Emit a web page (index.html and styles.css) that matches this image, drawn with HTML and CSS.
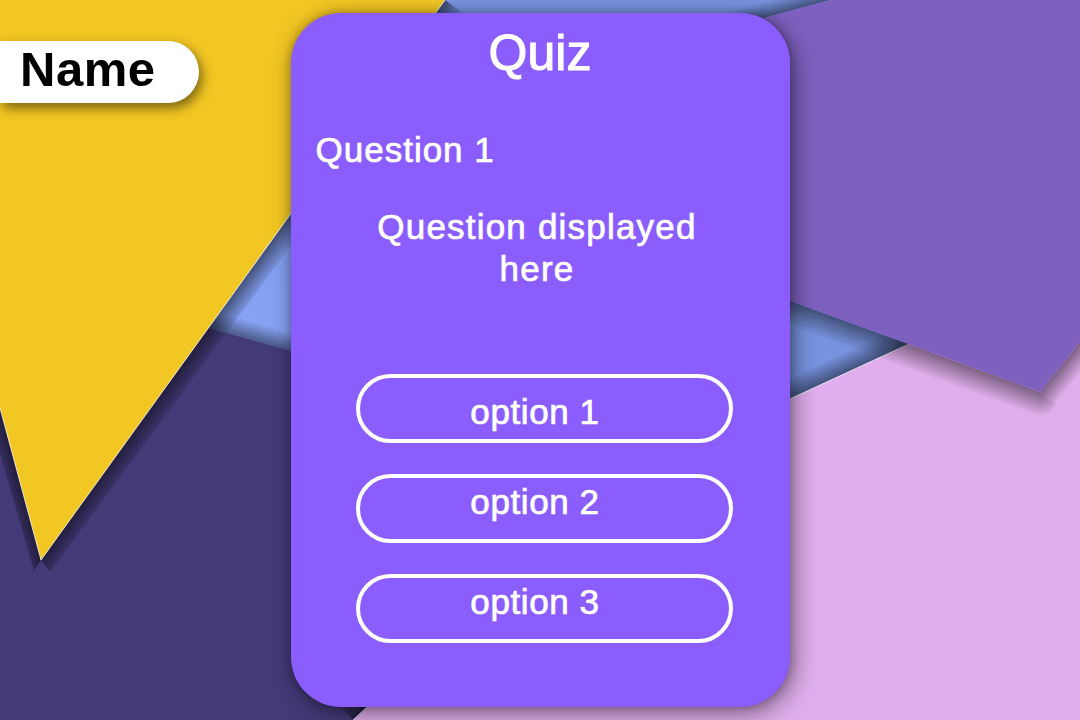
FILE: index.html
```html
<!DOCTYPE html>
<html lang="en">
<head>
<meta charset="utf-8">
<title>Quiz</title>
<link rel="stylesheet" href="styles.css">
</head>
<body>
<svg class="backdrop" viewBox="0 0 1080 720" width="1080" height="720" aria-hidden="true">
  <defs>
    <radialGradient id="glowA" cx="250" cy="320" r="260" gradientUnits="userSpaceOnUse">
      <stop offset="0" stop-color="#87a3f5"/>
      <stop offset="1" stop-color="#7893e0"/>
    </radialGradient>
    <linearGradient id="shDark" gradientUnits="userSpaceOnUse" x1="360" y1="370" x2="364.8" y2="352.6">
      <stop offset="0" stop-color="#000" stop-opacity="0.45"/><stop offset="1" stop-color="#000" stop-opacity="0"/>
    </linearGradient>
    <linearGradient id="shPinkTop" gradientUnits="userSpaceOnUse" x1="845" y1="373.5" x2="836.6" y2="355.3">
      <stop offset="0" stop-color="#000" stop-opacity="0.45"/><stop offset="1" stop-color="#000" stop-opacity="0"/>
    </linearGradient>
    <linearGradient id="shPinkLeft" gradientUnits="userSpaceOnUse" x1="481.5" y1="601" x2="467.9" y2="586.3">
      <stop offset="0" stop-color="#000" stop-opacity="0.45"/><stop offset="1" stop-color="#000" stop-opacity="0"/>
    </linearGradient>
    <linearGradient id="shPurpleBottom" gradientUnits="userSpaceOnUse" x1="911" y1="345" x2="902.8" y2="367.6">
      <stop offset="0" stop-color="#000" stop-opacity="0.45"/><stop offset="1" stop-color="#000" stop-opacity="0"/>
    </linearGradient>
    <linearGradient id="shPurpleRight" gradientUnits="userSpaceOnUse" x1="1060" y1="367" x2="1075.6" y2="379.5">
      <stop offset="0" stop-color="#000" stop-opacity="0.45"/><stop offset="1" stop-color="#000" stop-opacity="0"/>
    </linearGradient>
    <radialGradient id="shPurpleCorner" gradientUnits="userSpaceOnUse" cx="1040" cy="392" r="24">
      <stop offset="0" stop-color="#000" stop-opacity="0.45"/><stop offset="1" stop-color="#000" stop-opacity="0"/>
    </radialGradient>
    <linearGradient id="shPurpleTop" gradientUnits="userSpaceOnUse" x1="775" y1="15" x2="770.8" y2="-0.4">
      <stop offset="0" stop-color="#000" stop-opacity="0.45"/><stop offset="1" stop-color="#000" stop-opacity="0"/>
    </linearGradient>
    <linearGradient id="shYellowRight" gradientUnits="userSpaceOnUse" x1="243" y1="280" x2="260.8" y2="292.9">
      <stop offset="0" stop-color="#000" stop-opacity="0.5"/><stop offset="1" stop-color="#000" stop-opacity="0"/>
    </linearGradient>
    <linearGradient id="shYellowLeft" gradientUnits="userSpaceOnUse" x1="-34.5" y1="280" x2="-53.8" y2="285.2">
      <stop offset="0" stop-color="#000" stop-opacity="0.5"/><stop offset="1" stop-color="#000" stop-opacity="0"/>
    </linearGradient>
  </defs>
  <rect width="1080" height="720" fill="url(#glowA)"/>

  <polygon points="0,270 720,470 724.8,452.6 4.8,252.6" fill="url(#shDark)"/>
  <polygon points="0,270 720,470 720,720 0,720" fill="#433a78"/>

  <polygon points="610,482 1080,265 1071.6,246.8 601.6,463.8" fill="url(#shPinkTop)"/>
  <polygon points="353,720 610,482 596.4,467.3 339.4,705.3" fill="url(#shPinkLeft)"/>
  <polygon points="353,720 610,482 1080,265 1080,720" fill="#e0aeec"/>
  <polyline points="353,720 610,482 1080,265" fill="none" stroke="#fff" stroke-opacity="0.7" stroke-width="1"/>

  <polygon points="782,298 1040,392 1031.8,414.6 773.8,320.6" fill="url(#shPurpleBottom)"/>
  <polygon points="1040,392 1080,342 1095.6,354.5 1055.6,404.5" fill="url(#shPurpleRight)"/>
  <polygon points="1040,392 1031.8,414.6 1046,418 1055.6,404.5" fill="url(#shPurpleCorner)"/>
  <polygon points="720,30 830,0 825.8,-15.4 715.8,14.6" fill="url(#shPurpleTop)"/>
  <polygon points="720,30 830,0 1080,0 1080,342 1040,392 782,298" fill="#7e60bf"/>

  <polygon points="445,0 41,560 50,572 462.8,12.9" fill="url(#shYellowRight)"/>
  <polygon points="41,560 -110,0 -129.3,5.2 34,571" fill="url(#shYellowLeft)"/>
  <polygon points="-110,0 445,0 41,560" fill="#f2c623"/>
  <polyline points="445,0 41,560 -110,0" fill="none" stroke="#fff" stroke-opacity="0.75" stroke-width="1"/>
</svg>

<div class="name-tag">Name</div>

<main class="quiz-card">
  <h1 class="quiz-title">Quiz</h1>
  <h2 class="question-label">Question 1</h2>
  <p class="question-text">Question displayed here</p>
  <div class="options">
    <button class="option option-first">option 1</button>
    <button class="option">option 2</button>
    <button class="option">option 3</button>
  </div>
</main>
</body>
</html>
```

FILE: styles.css
```css
html,
body {
  margin: 0;
  padding: 0;
}

body {
  width: 1080px;
  height: 720px;
  overflow: hidden;
  position: relative;
  display: flex;
  justify-content: center;
  align-items: center;
  font-family: "Liberation Sans", Arial, sans-serif;
  background: #7e9ae9;
}

.backdrop {
  position: absolute;
  left: 0;
  top: 0;
  width: 1080px;
  height: 720px;
  z-index: 0;
}

.name-tag {
  position: absolute;
  left: 0;
  top: 41px;
  z-index: 2;
  box-sizing: border-box;
  width: 199px;
  height: 62px;
  padding-left: 20px;
  background: #ffffff;
  border-radius: 0 31px 31px 0;
  box-shadow: 3px 5px 12px rgba(0, 0, 0, 0.5);
  color: #000000;
  font-size: 49px;
  font-weight: bold;
  line-height: 56px;
  letter-spacing: 0.5px;
}

.quiz-card {
  position: relative;
  z-index: 1;
  box-sizing: border-box;
  width: 499px;
  height: 694px;
  padding: 12px 25px 0 25px;
  display: flex;
  flex-direction: column;
  background: #8b5dfd;
  border-radius: 50px;
  color: #ffffff;
  box-shadow: 4px 6px 24px rgba(0, 0, 0, 0.45), 0 0 10px rgba(0, 0, 0, 0.25);
  -webkit-text-stroke: 0.7px #ffffff;
}

.quiz-title {
  margin: 0;
  font-size: 50px;
  line-height: 56px;
  font-weight: normal;
  text-align: center;
  -webkit-text-stroke: 1.1px #ffffff;
}

.question-label {
  margin: 49px 0 0 0;
  font-size: 35px;
  line-height: 40px;
  font-weight: normal;
  letter-spacing: 1px;
}

.question-text {
  margin: 36px 0 0 0;
  align-self: center;
  width: 352px;
  padding-right: 6px;
  font-size: 35px;
  line-height: 42px;
  letter-spacing: 1.2px;
  text-align: center;
}

.options {
  margin: 84px 0 0 40px;
  width: 377px;
  display: flex;
  flex-direction: column;
  gap: 31px;
}

.option {
  box-sizing: border-box;
  height: 69px;
  width: 100%;
  margin: 0;
  padding: 0 18px 14px 0;
  display: flex;
  align-items: center;
  justify-content: center;
  background: transparent;
  border: 4px solid #ffffff;
  border-radius: 35px;
  color: #ffffff;
  font-family: "Liberation Sans", Arial, sans-serif;
  font-size: 35px;
  line-height: 40px;
  letter-spacing: 0.6px;
  -webkit-text-stroke: 0.7px #ffffff;
}

.option-first {
  padding: 6px 18px 0 0;
}
```
